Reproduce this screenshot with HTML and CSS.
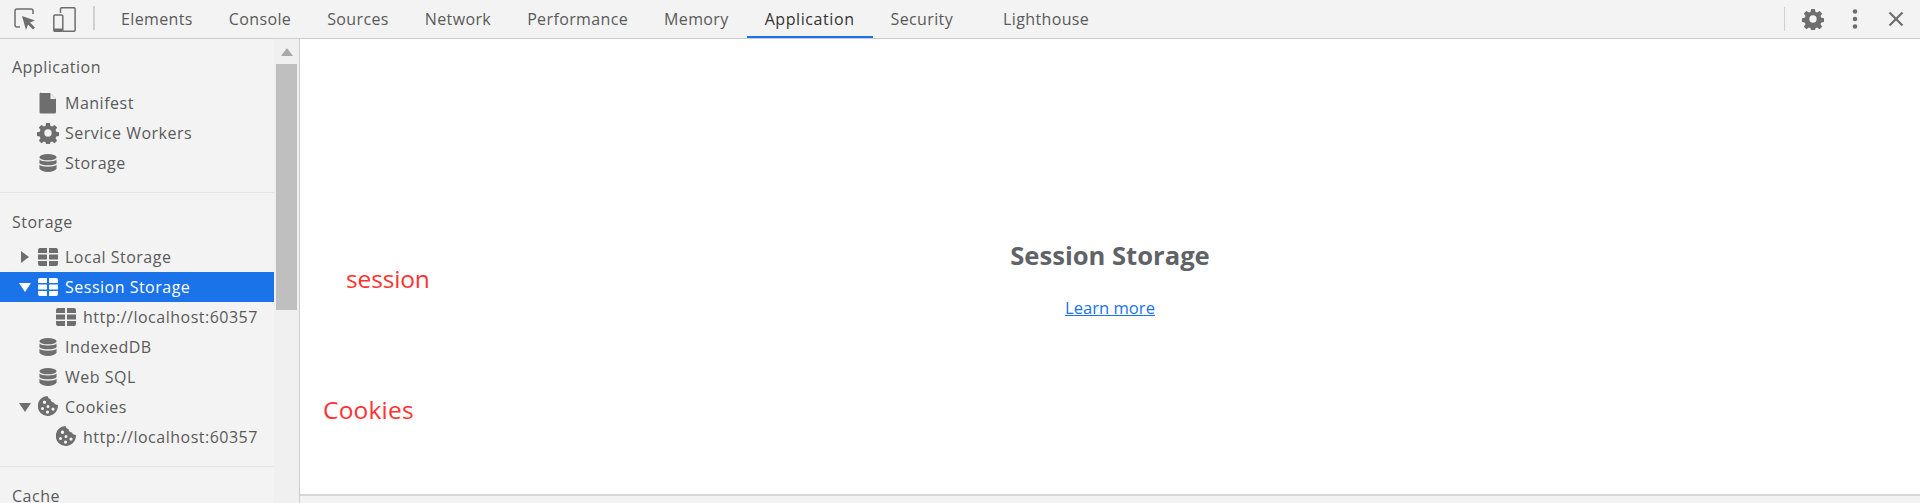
FILE: index.html
```html
<!DOCTYPE html>
<html lang="en">
<head>
  <meta charset="UTF-8">
  <title>DevTools - Application</title>
  <link rel="stylesheet" href="styles.css">
</head>
<body>
  <svg class="defs" width="0" height="0">
    <symbol id="i-file" viewBox="0 0 20 24"><path d="M3 2h9l6 6v13a1.500 1.500 0 0 1-1.500 1.500h-13.500a1.500 1.500 0 0 1-1.500-1.500v-18a1.500 1.500 0 0 1 1.500-1.500z"/><path d="M12.500 2.500v5.500h5.500z" fill="#f3f3f3"/></symbol>
    <symbol id="i-gear" viewBox="0 0 24 24"><path fill-rule="evenodd" d="M10 1h4l.6 3.200 1.900.8 2.700-1.800 2.800 2.800-1.800 2.700.8 1.900 3 .6v4l-3 .6-.8 1.900 1.800 2.700-2.800 2.800-2.700-1.800-1.900.8-.6 3.200h-4l-.6-3.200-1.900-.8-2.700 1.800-2.800-2.800 1.800-2.700-.8-1.900-3-.6v-4l3-.6.8-1.900-1.800-2.700 2.800-2.800 2.700 1.800 1.900-.8zM12 8a4 4 0 1 0 0 8 4 4 0 0 0 0-8z"/></symbol>
    <symbol id="i-db" viewBox="0 0 20 20"><ellipse cx="10" cy="3.500" rx="9.500" ry="3.500"/><path d="M.5 6c1.500 1.500 5 2.200 9.500 2.200s8-.7 9.500-2.200v4.200c-1.500 1.500-5 2.300-9.500 2.300s-8-.8-9.500-2.300zM.5 12c1.500 1.500 5 2.200 9.500 2.200s8-.7 9.500-2.200v4.500c-1.500 2.300-5 3.500-9.500 3.500s-8-1.200-9.500-3.500z"/></symbol>
    <symbol id="i-table" viewBox="0 0 20 18"><path d="M2 0h7v5h-9v-3a2 2 0 0 1 2-2zM11 0h7a2 2 0 0 1 2 2v3h-9zM0 6.500h9v5h-9zM11 6.500h9v5h-9zM0 13h9v5h-7a2 2 0 0 1-2-2zM11 13h9v3a2 2 0 0 1-2 2h-7z"/></symbol>
    <symbol id="i-cookie" viewBox="0 0 20 20"><path fill-rule="evenodd" d="M9.500 0c.5 2 1.500 3 3 3 0 2 1.500 3.500 3.500 3.500.3 1.500 2 2.500 4 2.500.3 6-4.300 11-10 11a10 10 0 0 1 -.5-20zM6.500 4.500a1.700 1.700 0 1 0 0 3.400 1.700 1.700 0 0 0 0-3.400zM4.500 11a1.500 1.500 0 1 0 0 3 1.500 1.500 0 0 0 0-3zM10 9a1.500 1.500 0 1 0 0 3 1.500 1.500 0 0 0 0-3zM9.500 14.500a1.600 1.600 0 1 0 0 3.200 1.600 1.600 0 0 0 0-3.200zM15 11.500a1.600 1.600 0 1 0 0 3.200 1.600 1.600 0 0 0 0-3.200z"/></symbol>
  </svg>

  <div class="toolbar">
    <div class="tool-icons">
      <svg class="tool-icon" width="22" height="22" viewBox="0 0 22 22"><path d="M6 19H3a2 2 0 0 1-2-2V3a2 2 0 0 1 2-2h14a2 2 0 0 1 2 2v3" fill="none" stroke="#6e6e6e" stroke-width="1.500"/><path d="M8 8l13 4.500-5 2 5 5-2 2-5-5-2 5.500z" fill="#6e6e6e"/></svg>
      <svg class="tool-icon" width="23" height="25" viewBox="0 0 23 25"><path d="M7.500 6V2a1.300 1.300 0 0 1 1.300-1.300h12a1.300 1.300 0 0 1 1.300 1.300v21a1.300 1.300 0 0 1-1.300 1.300H10" fill="none" stroke="#6e6e6e" stroke-width="1.500"/><rect x=".8" y="8" width="9" height="16.300" rx="1.300" fill="none" stroke="#6e6e6e" stroke-width="1.500"/><rect x=".8" y="21.500" width="9" height="3" fill="#6e6e6e"/></svg>
    </div>
    <div class="tool-sep"></div>
    <div class="tabs">
      <div class="tab">Elements</div>
      <div class="tab">Console</div>
      <div class="tab">Sources</div>
      <div class="tab">Network</div>
      <div class="tab">Performance</div>
      <div class="tab">Memory</div>
      <div class="tab active">Application</div>
      <div class="tab tab-wide">Security</div>
      <div class="tab">Lighthouse</div>
    </div>
    <div class="tool-right">
      <div class="tool-sep"></div>
      <svg class="gear" width="22" height="22" viewBox="0 0 24 24"><use href="#i-gear"/></svg>
      <svg class="dots" width="6" height="20" viewBox="0 0 6 20"><circle cx="3" cy="2.500" r="2.300"/><circle cx="3" cy="10" r="2.300"/><circle cx="3" cy="17.500" r="2.300"/></svg>
      <svg class="close" width="16" height="16" viewBox="0 0 16 16"><path d="M1.500 1.500l13 13M14.500 1.500l-13 13" stroke="#6e6e6e" stroke-width="2.200" fill="none"/></svg>
    </div>
  </div>

  <div class="panel">
    <div class="sidebar">
      <div class="tree">
        <div class="section">
          <div class="section-title">Application</div>
          <div class="row"><span class="arrow"></span><svg class="icon"><use href="#i-file" x="2" y="0" width="20" height="24"/></svg><span>Manifest</span></div>
          <div class="row"><span class="arrow"></span><svg class="icon"><use href="#i-gear" x="1" y="1" width="22" height="22"/></svg><span>Service Workers</span></div>
          <div class="row"><span class="arrow"></span><svg class="icon"><use href="#i-db" x="3" y="2" width="18" height="20"/></svg><span>Storage</span></div>
        </div>
        <div class="section">
          <div class="section-title">Storage</div>
          <div class="row"><span class="arrow right"></span><svg class="icon"><use href="#i-table" x="2" y="3" width="20" height="18"/></svg><span>Local Storage</span></div>
          <div class="row selected"><span class="arrow down"></span><svg class="icon"><use href="#i-table" x="2" y="3" width="20" height="18"/></svg><span>Session Storage</span></div>
          <div class="row child"><svg class="icon"><use href="#i-table" x="2" y="3" width="20" height="18"/></svg><span>http://localhost:60357</span></div>
          <div class="row"><span class="arrow"></span><svg class="icon"><use href="#i-db" x="3" y="2" width="18" height="20"/></svg><span>IndexedDB</span></div>
          <div class="row"><span class="arrow"></span><svg class="icon"><use href="#i-db" x="3" y="2" width="18" height="20"/></svg><span>Web SQL</span></div>
          <div class="row"><span class="arrow down"></span><svg class="icon"><use href="#i-cookie" x="2" y="1" width="20" height="20"/></svg><span>Cookies</span></div>
          <div class="row child"><svg class="icon"><use href="#i-cookie" x="2" y="1" width="20" height="20"/></svg><span>http://localhost:60357</span></div>
        </div>
        <div class="section">
          <div class="section-title">Cache</div>
        </div>
      </div>
      <div class="scrollbar">
        <div class="scroll-up"></div>
        <div class="scroll-thumb"></div>
      </div>
    </div>

    <div class="main">
      <div class="empty">
        <h2>Session Storage</h2>
        <a href="#">Learn more</a>
      </div>
      <div class="note note-session">session</div>
      <div class="note note-cookies">Cookies</div>
    </div>
  </div>
</body>
</html>
```

FILE: styles.css
```css
body {
  font-family: "Open Sans", "Noto Sans", Arial, sans-serif;
  font-size: 16px;
  letter-spacing: 0.5px;
  color: #5a5a5a;
  background-color: #f3f3f3;
  margin: 0;
  height: 503px;
  overflow: hidden;
}

.defs {
  position: absolute;
}

.toolbar {
  display: flex;
  align-items: stretch;
  height: 38px;
  border-bottom: 1px solid #cdcdcd;
  background-color: #f3f3f3;
}

.tool-icons {
  display: flex;
  align-items: center;
  gap: 17px;
  padding-left: 14px;
  width: 93px;
  box-sizing: border-box;
}

.tool-icon {
  flex: none;
}

.tool-sep {
  width: 2px;
  height: 24px;
  margin-top: 6px;
  background-color: #d0d0d0;
}

.tabs {
  display: flex;
  margin-left: 8px;
  letter-spacing: 0.37px;
}

.tab {
  display: flex;
  align-items: center;
  padding: 0 18px;
  height: 38px;
  box-sizing: border-box;
  white-space: nowrap;
}

.tab.active {
  color: #333;
  letter-spacing: 0.58px;
  border-bottom: 2px solid #1a73e8;
  padding-top: 2px;
}

.tab-wide {
  padding-right: 32px;
}

.tool-right {
  display: flex;
  align-items: center;
  margin-left: auto;
  padding-right: 16px;
}

.tool-right .tool-sep {
  width: 1px;
  margin-top: 0;
  margin-right: 17px;
}

.gear {
  fill: #6e6e6e;
  margin-right: 28px;
}

.dots {
  fill: #6e6e6e;
  margin-right: 30px;
}

.panel {
  display: flex;
  height: 464px;
}

.sidebar {
  display: flex;
  flex: none;
  width: 300px;
  box-sizing: border-box;
  border-right: 1px solid #cdcdcd;
  overflow: hidden;
}

.tree {
  flex: none;
  width: 274px;
}

.section {
  border-bottom: 1px solid #e4e4e4;
  padding-bottom: 14px;
}

.section + .section {
  padding-top: 14px;
}

.section:last-child {
  border-bottom: none;
}

.section-title {
  height: 30px;
  line-height: 30px;
  padding-left: 12px;
  margin-top: 13px;
  margin-bottom: 6px;
}

.section + .section .section-title {
  margin-top: 0;
  margin-bottom: 5px;
}

.row {
  display: flex;
  align-items: center;
  height: 30px;
  padding-left: 17px;
  white-space: nowrap;
}

.row.child {
  padding-left: 51px;
}

.row.selected {
  background-color: #1a73e8;
  color: #fff;
}

.arrow {
  flex: none;
  width: 16px;
  display: flex;
  justify-content: center;
}

.arrow.right::before {
  content: "";
  border-left: 8px solid #6e6e6e;
  border-top: 6px solid transparent;
  border-bottom: 6px solid transparent;
}

.arrow.down::before {
  content: "";
  border-top: 9px solid #6e6e6e;
  border-left: 6px solid transparent;
  border-right: 6px solid transparent;
}

.row.selected .arrow.down::before {
  border-top-color: #fff;
}

.icon {
  flex: none;
  width: 24px;
  height: 24px;
  margin-left: 3px;
  margin-right: 5px;
  fill: #6e6e6e;
}

.row.selected .icon {
  fill: #fff;
}

.scrollbar {
  flex: none;
  width: 25px;
  background-color: #f0f0f0;
}

.scroll-up {
  width: 0;
  margin: 9px auto 8px;
  border-bottom: 8px solid #a9a9a9;
  border-left: 6px solid transparent;
  border-right: 6px solid transparent;
}

.scroll-thumb {
  width: 21px;
  height: 246px;
  margin-left: 2px;
  background-color: #bfbfbf;
}

.main {
  flex: 1;
  position: relative;
  height: 455px;
  background-color: #fff;
  border-bottom: 2px solid #d6d6d6;
  text-align: center;
  letter-spacing: 0;
}

.empty {
  padding-top: 199px;
}

.empty h2 {
  margin: 0 0 22px;
  font-size: 25.6px;
  font-weight: 700;
  line-height: 36px;
  color: #5f6368;
}

.empty a {
  font-size: 16.6px;
  color: #1a73e8;
}

.note {
  position: absolute;
  font-size: 24.5px;
  line-height: 32px;
  color: #ff3333;
}

.note-session {
  left: 46px;
  top: 224px;
  letter-spacing: -0.15px;
}

.note-cookies {
  left: 23px;
  top: 355px;
  letter-spacing: 0.2px;
}
```
